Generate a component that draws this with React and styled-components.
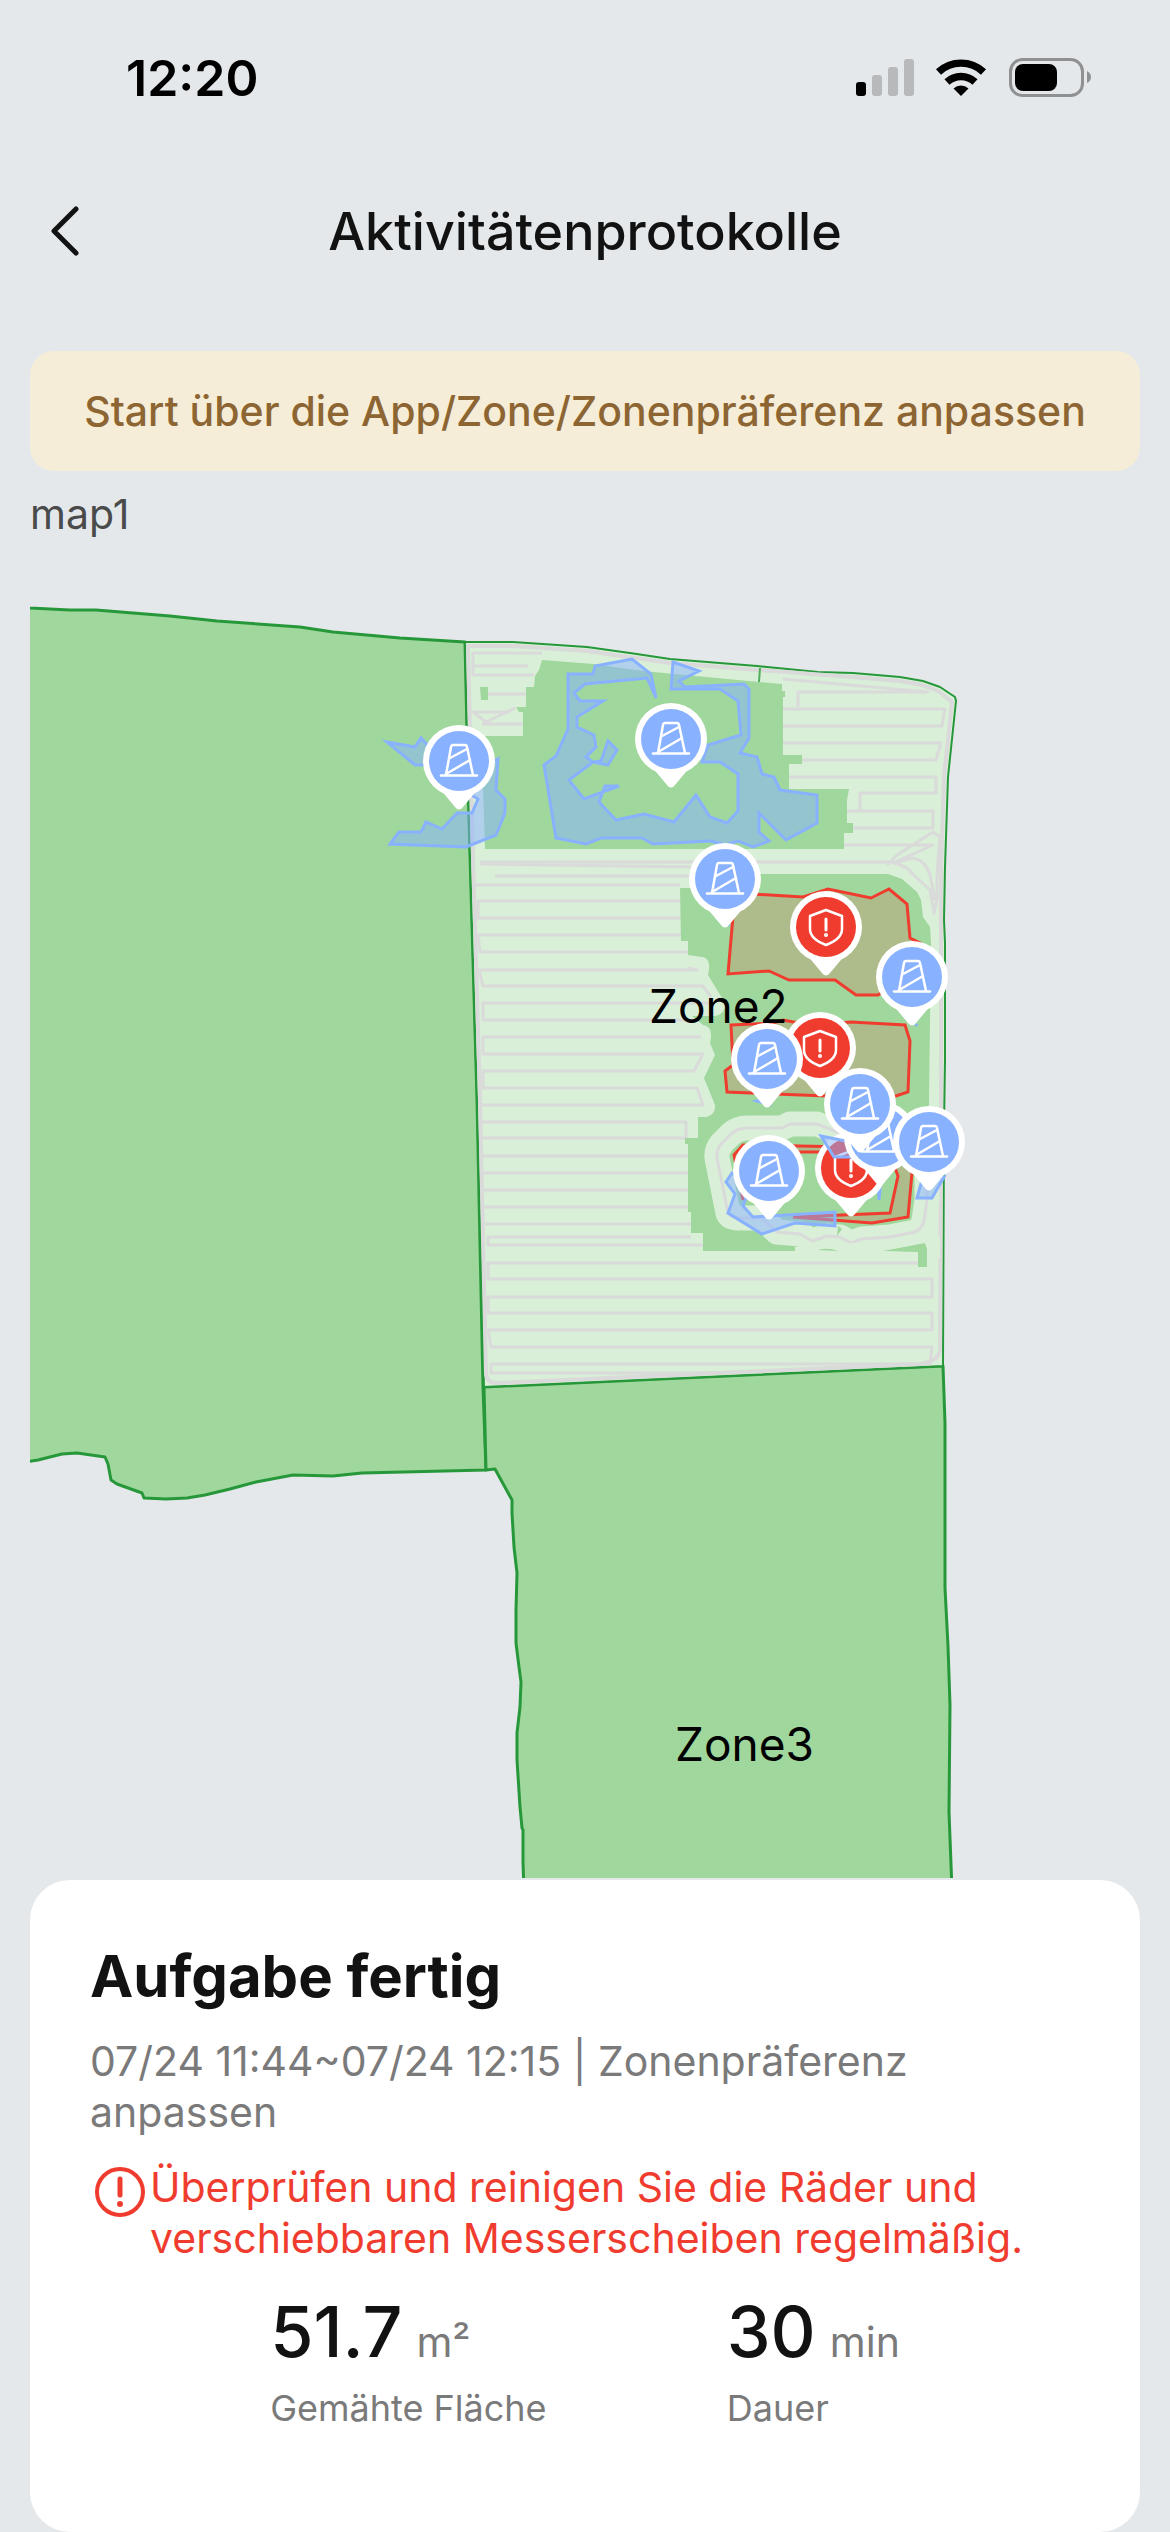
import React from "react";
import styled, { createGlobalStyle } from "styled-components";

const obstacles = [
  { x: 459, y: 761 },
  { x: 671, y: 739 },
  { x: 725, y: 879 },
  { x: 912, y: 977 },
  { x: 767, y: 1059 },
  { x: 880, y: 1137 },
  { x: 860, y: 1104 },
  { x: 929, y: 1142 },
  { x: 769, y: 1171 },
];

const noGoZones = [
  { x: 826, y: 927 },
  { x: 820, y: 1048 },
  { x: 851, y: 1168 },
];

const stats = [
  { value: "51.7", unit: "m²", label: "Gemähte Fläche" },
  { value: "30", unit: "min", label: "Dauer" },
];

const Pin = ({ x, y, color, children }) => (
  <g transform={`translate(${x} ${y})`}>
    <path d="M-19 28 L-4 46 Q0 51 4 46 L19 28 Z" fill="#fff" />
    <circle r="36" fill="#fff" />
    <circle r="30" fill={color} />
    <PinGlyph>{children}</PinGlyph>
  </g>
);

const ObstaclePin = ({ x, y }) => (
  <Pin x={x} y={y} color="#88b2ff">
    <path d="M-13 14 L-8 -14 Q-7.600 -16 -6 -16 H6 Q7.600 -16 8 -14 L14 14" />
    <path d="M-18 14.500 H18" />
    <path d="M-9 -3 L8 -12 M-13 13 L11 -1" />
  </Pin>
);

const AlertPin = ({ x, y }) => (
  <Pin x={x} y={y} color="#f03c2e">
    <path d="M0 -17 L16 -11 V2 C16 10 8 15 0 18 C-8 15 -16 10 -16 2 V-11 Z" />
    <path d="M0 -8 V3" strokeWidth="3" />
    <circle cy="8" r="0.8" />
  </Pin>
);

const StatusIcons = () => (
  <svg width="236" height="42" viewBox="855 57 236 42" aria-hidden="true">
    <rect x="856" y="82" width="10" height="14" rx="3" />
    <g fill="#b8b9bb">
      <rect x="872" y="75" width="10" height="21" rx="3" />
      <rect x="888" y="67" width="10" height="29" rx="3" />
      <rect x="904" y="59" width="10" height="37" rx="3" />
    </g>
    <g fill="none" stroke="#000" strokeWidth="7.4">
      <path d="M938.500 72 A33 33 0 0 1 983.500 72" />
      <path d="M947 82 A20.500 20.500 0 0 1 975 82" />
    </g>
    <path d="M961 96 L953.500 88.500 A11 11 0 0 1 968.500 88.500 Z" />
    <rect
      x="1010.5" y="59.5" width="72" height="36" rx="12"
      fill="none" stroke="#8f9092" strokeWidth="3"
    />
    <rect x="1015" y="64" width="42" height="27" rx="8" />
    <path d="M1087 71 Q1091 73 1091 77 Q1091 81 1087 83 Z" fill="#8f9092" />
  </svg>
);

const LawnMap = () => (
  <MapSvg viewBox="30 557 1110 1321" role="img" aria-label="map1">
    {/* zone 1 */}
    <Zone d="M20 607 L30 608 L70 610 L96 610 L170 616 L217 621 L300 627 L333 632 L400 638 L465 642 L469 820 L477 1099 L483 1387 L486 1470 L362 1473 L333 1476 L293 1475 L256 1482 L230 1489 L205 1495 L187 1498 L166 1499 L144 1498 L142 1493 L117 1484 L111 1480 L108 1464 L105 1457 L77 1453 L62 1454 L38 1460 L20 1463 Z" />
    {/* zone 3 */}
    <Zone d="M484 1387 L943 1366 L945 1423 L945 1588 L948 1646 L950 1705 L949 1812 L952 1890 L524 1890 L523 1863 L523 1830 L522 1828 L520 1807 L517 1760 L517 1733 L520 1707 L521 1682 L519 1667 L516 1643 L516 1610 L517 1573 L514 1547 L512 1513 L512 1500 L495 1469 L486 1470 Z" />
    {/* zone 2, already mowed */}
    <Zone
      $mowed
      d="M465 642 L513 642 L587 647 L630 653 L670 659 L757 666 L818 672 L853 673 L900 677 L923 681 L940 687 L955 697 L956 701 L948 777 L945 867 L944 920 L945 943 L945 1060 L944 1127 L943 1366 L484 1387 L477 1099 L469 820 Z"
    />

    <Track>
      <path
        strokeWidth="4"
        d="M542 648 L513 646 H468 L472 820 L480 1099 L486 1374 Q487 1383 497 1383 L920 1364 Q939 1361 940 1350 L941 1127 L941 867 L944 777 L952 702 L938 691 L922 685 L899 681 L852 677 L757 670 L670 663 L587 651 L542 648"
      />
      <path d="M542 653 H473 V675 H534 M473 666 H528 M488 694 H526 M510 712 H473 L486 722 L515 708 M482 724 H523" />
      <path d="M783 679 L928 692 H798 V707 M783 709 H945 L942 726 H783 M783 743 H941 L936 760 H802 M789 777 H936 V793 H860 V811 M847 811 H933 V828 H853" />
      <path d="M844 845 H933 L893 863 L913 858 Q926 861 930 875 L935 900 M887 865 L897 855 L933 832 L940 837 L938 860 L937 880 V900 L934 913 L930 890 L917 878 L907 868 L893 862 H480" />
      <path d="M480 864 L700 867 M495 876 H700 M476 885 H680" />
      <path d="M682 901 H478 V918 H682 M682 935 H478 L480 952 H688 M688 968 L697 970 H479 L483 986 H703 L711 997" />
      <path d="M712 1003 H483 V1020 H712 M701 1037 H483 V1054 H703 L694 1071 H483 V1088 H697 L703 1105 H480" />
      <path d="M480 1122 H686 V1138 H480 M480 1156 H688 M480 1173 H688 M482 1190 H688 M483 1207 H688 M485 1224 H691 M691 1237 H488 V1245 H703" />
      <path d="M918 1263 H488 V1279 H932 V1297 H488 V1313 H932 V1330 H488 L491 1347 H932 L930 1364 H491 V1373 H720" />
    </Track>

    {/* parts of zone 2 still to be mowed */}
    <Uncut d="M542 660 L593 664 L643 671 L759 682 L782 684 V691 H785 V697 H783 V755 H802 V764 H789 V789 H849 L847 800 V823 H853 V833 H844 V849 H485 L483 787 V736 H523 V712 H519 L516 707 H526 V687 H534 L535 676 L539 670 Z" />
    <Uncut d="M480 687 H488 V700 H481 Z" />
    <Uncut d="M680 888 H710 V874 H888 L902 879 L917 892 L921 900 L923 917 L930 927 L931 943 L929 1097 V1225 L900 1242 L800 1240 V1251 H703 V1233 H691 V1212 H688 V1144 H685 V1138 H698 V1117 H707 Q716 1114 715 1105 L704 1078 L715 1055 L710 1043 Q714 1026 703 1025 L692 1016 H715 Q726 1014 725 1003 L708 975 Q712 958 702 957 L688 955 V941 H681 Z" />
    <path d="M760 668 L759 682" stroke="#4fae59" strokeWidth="2" />

    <path d={edgeLoop} fill="none" stroke="#d9efd8" strokeWidth="25" strokeLinejoin="round" />
    <path d={edgeLoop} fill="none" stroke="#dadada" strokeWidth="3" strokeLinejoin="round" />
    <path d="M795 1247 L940 1237 V1258 H795 Z" fill="#d9efd8" />
    <Uncut d="M818 1250 Q828 1247 838 1251 Z M883 1251 L925 1243 L927 1249 V1267 H918 V1252 Z M838 1226 L842 1229 L837 1236 Z" />

    <NoGo d="M735 893 L753 894 L803 897 L828 889 L871 898 L889 889 L907 904 L910 938 L920 943 L900 980 L878 995 H856 L835 980 H789 L769 971 L728 974 Z" />
    <NoGo d="M731 1025 L773 1023 L783 1020 L810 1025 L851 1022 L905 1025 L910 1041 L908 1092 L893 1097 L827 1096 L727 1092 L725 1071 L733 1065 Z" />
    <NoGo d="M743 1145 L850 1147 L905 1155 L912 1173 L908 1217 L872 1223 L793 1217 L890 1213 L898 1176 L890 1155 L850 1152 H755 L745 1165 L743 1200 L734 1155 Z" />

    <Obstacle d="M387 742 L415 747 L421 738 L432 750 L470 775 L498 759 L496 790 L505 799 V813 L496 835 L466 847 L390 844 L399 832 H421 L426 822 L442 829 L457 813 H472 L478 799 L460 788 L432 765 H415 Z" />
    <Obstacle d="M568 674 H593 L595 666 L632 659 L651 674 L656 698 L647 678 L585 684 L574 693 L580 701 H603 L577 717 V727 L594 735 L596 747 L586 757 L593 762 L601 761 L608 741 L617 750 L608 765 L593 762 L569 780 L584 799 L619 786 H605 L599 802 L616 820 L644 814 L674 822 L696 795 L710 817 L727 823 L738 811 V774 L720 762 H702 L708 745 L741 735 L738 701 L720 689 H671 L673 662 L699 671 L679 681 L685 687 L744 684 L749 689 V738 L740 753 L757 757 L762 774 L774 777 L780 790 L817 795 V823 L786 840 L759 813 V832 L769 841 L753 847 L738 841 L726 845 L710 841 L653 844 L642 838 H601 L586 844 L556 838 L544 765 L556 756 L568 729 Z" />
    <Obstacle d="M732 1173 L726 1182 L735 1194 L728 1213 L762 1234 L795 1223 L835 1226 V1212 L753 1217 L743 1206 L746 1198 L742 1180 Z" />
    <Obstacle d="M917 1198 H932 L944 1177 L922 1180 Z" />
    <Obstacle d="M878 1180 H881 L879 1200 Z M757 1101 L764 1099 L768 1104 Z M728 924 L729 926 M916 1024 L917 1026" />

    <ZoneName x="649" y="1023">Zone2</ZoneName>
    <ZoneName x="675" y="1761">Zone3</ZoneName>

    {noGoZones.map((pin) => (
      <AlertPin key={`${pin.x}-${pin.y}`} {...pin} />
    ))}
    <Obstacle d="M821 1136 L860 1144 L856 1157 H834 Z" />
    {obstacles.map((pin) => (
      <ObstaclePin key={`${pin.x}-${pin.y}`} {...pin} />
    ))}
  </MapSvg>
);

const edgeLoop =
  "M840 1133 L827 1128 L817 1124 H790 L782 1128 H747 Q738 1128 731 1134 L722 1143 Q716 1150 717 1158 L728 1213 Q730 1218 740 1218 L762 1218 L777 1232 L800 1234 L812 1241 L827 1236 L840 1237 L851 1243 L862 1239 L890 1237 L915 1232 Q923 1228 924 1220 L927 1200 V1145 L918 1129 L880 1122 Z";

export default function App() {
  return (
    <Screen>
      <GlobalStyle />
      <StatusBar>
        <Time>12:20</Time>
        <StatusIcons />
      </StatusBar>
      <NavBar>
        <BackButton type="button" aria-label="Zurück">
          <svg width="30" height="52" viewBox="0 0 30 52" aria-hidden="true">
            <path
              d="M26 4 L4 26 L26 48"
              fill="none" stroke="#121212" strokeWidth="5"
              strokeLinecap="round" strokeLinejoin="round"
            />
          </svg>
        </BackButton>
        <Title>Aktivitätenprotokolle</Title>
      </NavBar>
      <Content>
        <Banner>Start über die App/Zone/Zonenpräferenz anpassen</Banner>
        <MapName>map1</MapName>
        <LawnMap />
        <Card>
          <CardTitle>Aufgabe fertig</CardTitle>
          <Period>07/24 11:44~07/24 12:15 | Zonenpräferenz anpassen</Period>
          <Warning>
            <WarningIcon viewBox="0 0 60 60" aria-hidden="true">
              <circle cx="30" cy="30" r="23" fill="none" stroke="#f03c2e" strokeWidth="4" />
              <path d="M30 17 V33" stroke="#f03c2e" strokeWidth="5" strokeLinecap="round" />
              <circle cx="30" cy="42" r="3" fill="#f03c2e" />
            </WarningIcon>
            <span>
              Überprüfen und reinigen Sie die Räder und verschiebbaren
              Messerscheiben regelmäßig.
            </span>
          </Warning>
          <Stats>
            {stats.map(({ value, unit, label }) => (
              <div key={label}>
                <StatValue>
                  {value}
                  <Unit>{unit}</Unit>
                </StatValue>
                <StatLabel>{label}</StatLabel>
              </div>
            ))}
          </Stats>
        </Card>
      </Content>
    </Screen>
  );
}

const GlobalStyle = createGlobalStyle`
  * {
    box-sizing: border-box;
  }
  body {
    margin: 0;
    background: #e4e8eb;
    color: #121212;
    font-family: Inter, "Liberation Sans", sans-serif;
  }
`;

const Screen = styled.div`
  min-height: 100vh;
  display: flex;
  flex-direction: column;
`;

const StatusBar = styled.div`
  height: 156px;
  padding: 0 79px 0 126px;
  display: flex;
  align-items: center;
  justify-content: space-between;
`;

const Time = styled.span`
  font-size: 50px;
  font-weight: 600;
  color: #000;
`;

const NavBar = styled.header`
  height: 150px;
  padding: 0 30px;
  display: grid;
  grid-template-columns: 70px 1fr 70px;
  align-items: center;
`;

const BackButton = styled.button`
  height: 70px;
  padding: 0 20px;
  border: 0;
  background: none;
  display: flex;
  align-items: center;
  cursor: pointer;
`;

const Title = styled.h1`
  margin: 0;
  text-align: center;
  font-size: 52px;
  font-weight: 500;
`;

const Content = styled.main`
  flex: 1;
  padding: 45px 30px 0;
  display: flex;
  flex-direction: column;
`;

const Banner = styled.div`
  min-height: 120px;
  border-radius: 24px;
  background: #f5edd7;
  color: #8d6533;
  display: flex;
  align-items: center;
  justify-content: center;
  font-size: 41px;
  font-weight: 500;
`;

const MapName = styled.div`
  font-size: 41px;
  line-height: 86px;
  color: #4a4a4a;
`;

const MapSvg = styled.svg`
  width: 100%;
  display: block;
`;

const Zone = styled.path`
  fill: ${(props) => (props.$mowed ? "#d9efd8" : "#a0d79d")};
  stroke: #27983a;
  stroke-width: ${(props) => (props.$mowed ? 2 : 3)};
  stroke-linejoin: round;
`;

const Uncut = styled.path`
  fill: #a0d79d;
`;

const Track = styled.g`
  fill: none;
  stroke: #dadada;
  stroke-width: 3;
  stroke-linejoin: round;
`;

const NoGo = styled.path`
  fill: rgba(240, 60, 46, 0.17);
  stroke: #f03c2e;
  stroke-width: 3;
`;

const Obstacle = styled.path`
  fill: rgba(136, 178, 255, 0.5);
  stroke: #88b2ff;
  stroke-width: 3;
`;

const PinGlyph = styled.g`
  fill: none;
  stroke: #fff;
  stroke-width: 2.5;
  stroke-linecap: round;
  stroke-linejoin: round;
`;

const ZoneName = styled.text`
  font-size: 46px;
  fill: #000;
`;

const Card = styled.section`
  flex: 1;
  margin-top: 2px;
  padding: 60px 60px 96px;
  border-radius: 40px;
  background: #fff;
`;

const CardTitle = styled.h2`
  margin: 0;
  font-size: 58px;
  line-height: 72px;
  font-weight: 700;
`;

const Period = styled.p`
  margin: 24px 0;
  font-size: 41px;
  line-height: 51px;
  color: #7a7a7a;
`;

const Warning = styled.p`
  margin: 0;
  display: flex;
  font-size: 41px;
  line-height: 51px;
  color: #f03c2e;
`;

const WarningIcon = styled.svg`
  flex: none;
  width: 60px;
  height: 60px;
`;

const Stats = styled.div`
  margin-top: 26px;
  display: flex;
  justify-content: space-evenly;
`;

const StatValue = styled.div`
  display: flex;
  align-items: baseline;
  gap: 14px;
  font-size: 70px;
  line-height: 84px;
  font-weight: 500;
`;

const Unit = styled.span`
  font-size: 41px;
  font-weight: 400;
  color: #7a7a7a;
`;

const StatLabel = styled.div`
  font-size: 36px;
  line-height: 48px;
  color: #7a7a7a;
`;
